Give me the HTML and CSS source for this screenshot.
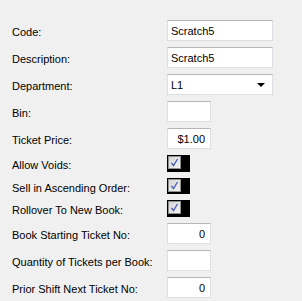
FILE: index.html
```html
<!DOCTYPE html>
<html lang="en">
<head>
    <meta charset="UTF-8">
    <title>Scratch Ticket Setup</title>
    <link rel="stylesheet" href="styles.css">
</head>
<body>
    <div class="form">
        <label class="label">Code:</label>
        <input class="field wide" type="text" value="Scratch5">

        <label class="label">Description:</label>
        <input class="field wide" type="text" value="Scratch5">

        <label class="label">Department:</label>
        <div class="field wide select">
            <span>L1</span>
            <span class="arrow"></span>
        </div>

        <label class="label">Bin:</label>
        <input class="field small" type="text" value="">

        <label class="label">Ticket Price:</label>
        <input class="field small num" type="text" value="$1.00">

        <label class="label">Allow Voids:</label>
        <div class="check-bg"><span class="check"><svg width="9" height="9" viewBox="0 0 9 9"><path d="M1.5 5 L3.5 7.5 L7.5 1" fill="none" stroke="#4a5cb8" stroke-width="1.3"/></svg></span></div>

        <label class="label">Sell in Ascending Order:</label>
        <div class="check-bg"><span class="check"><svg width="9" height="9" viewBox="0 0 9 9"><path d="M1.5 5 L3.5 7.5 L7.5 1" fill="none" stroke="#4a5cb8" stroke-width="1.3"/></svg></span></div>

        <label class="label">Rollover To New Book:</label>
        <div class="check-bg"><span class="check"><svg width="9" height="9" viewBox="0 0 9 9"><path d="M1.5 5 L3.5 7.5 L7.5 1" fill="none" stroke="#4a5cb8" stroke-width="1.3"/></svg></span></div>

        <label class="label">Book Starting Ticket No:</label>
        <input class="field small num" type="text" value="0">

        <label class="label">Quantity of Tickets per Book:</label>
        <input class="field small num" type="text" value="">

        <label class="label">Prior Shift Next Ticket No:</label>
        <input class="field small num" type="text" value="0">
    </div>
</body>
</html>
```

FILE: styles.css
```css
body {
    margin: 0;
    background: #f0f0f0;
    font-family: 'Liberation Sans', Arial, sans-serif;
    font-size: 11px;
    color: #000;
}

.form {
    display: grid;
    grid-template-columns: 155px auto;
    grid-template-rows: 21px 21px 21px 21px 21px 17px 16px 17px 21px 21px 21px;
    row-gap: 6px;
    padding: 20px 0 0 12px;
}

.label {
    display: flex;
    align-items: center;
    padding-top: 3px;
}

.field {
    box-sizing: border-box;
    height: 21px;
    margin: 0;
    padding: 0 3px;
    border: 1px solid #dcdfe3;
    border-top-color: #b5b5b5;
    background: #fff;
    font-family: inherit;
    font-size: 11px;
    color: #000;
    outline: none;
}

.wide {
    width: 106px;
}

.small {
    width: 44px;
}

.num {
    text-align: right;
    padding-right: 5px;
}

.select {
    display: flex;
    align-items: center;
    justify-content: space-between;
    padding-right: 7px;
}

.arrow {
    width: 0;
    height: 0;
    border-left: 4px solid transparent;
    border-right: 4px solid transparent;
    border-top: 4px solid #000;
}

.check-bg {
    width: 23px;
    height: 100%;
    background: #000;
    display: flex;
    align-items: flex-start;
    padding-top: 1px;
    box-sizing: border-box;
}

.check {
    width: 13px;
    height: 13px;
    margin-left: 1px;
    box-sizing: border-box;
    border: 1px solid #8e8f8f;
    background: linear-gradient(135deg, #d4d4d4, #f4f4f4);
    display: flex;
    align-items: center;
    justify-content: center;
}
```
